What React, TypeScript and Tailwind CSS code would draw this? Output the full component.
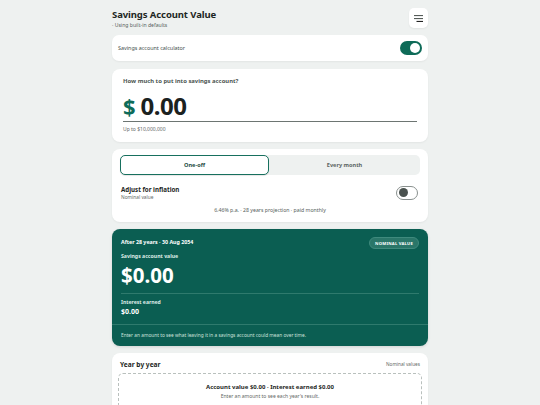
import React from "react";

function Toggle({ on }: { on: boolean }) {
  if (on) {
    return (
      <div className="flex h-[14px] w-[22px] items-center justify-end rounded-full bg-[#0e6b58] px-[2px]">
        <div className="h-[10px] w-[10px] rounded-full bg-white" />
      </div>
    );
  }
  return (
    <div className="flex h-[14px] w-[22px] items-center justify-start rounded-full border border-[#8a918f] bg-white px-[2px]">
      <div className="h-[9px] w-[9px] rounded-full bg-[#4a524f]" />
    </div>
  );
}

export default function App() {
  return (
    <div
      className="min-h-[405px] w-full bg-[#eef1f0] text-[#1d2623]"
      style={{ fontFamily: '"Noto Sans", "Open Sans", sans-serif' }}
    >
      <div className="mx-auto flex w-[316px] flex-col gap-[7px] pt-[8px]">
        {/* header */}
        <div className="flex h-[20px] items-start justify-between">
          <div className="pt-[1px]">
            <h1 className="text-[9.5px] font-bold leading-[12px] tracking-[-0.1px]">Savings Account Value</h1>
            <p className="mt-[1px] text-[5.1px] leading-[6px] text-[#555e5b]">· Using built-in defaults</p>
          </div>
          <button className="flex h-[20px] w-[19px] items-center justify-center rounded-[5px] bg-white shadow-[0_1px_2px_rgba(0,0,0,0.06)]">
            <svg width="9" height="7" viewBox="0 0 9 7">
              <rect x="0" y="0" width="9" height="1.1" fill="#555c59" />
              <rect x="0" y="3" width="9" height="1.1" fill="#555c59" />
              <rect x="2.5" y="5.9" width="6.5" height="1.1" fill="#222" />
            </svg>
          </button>
        </div>

        {/* calculator card */}
        <div className="flex h-[26px] items-center justify-between rounded-[7px] bg-white px-[6px] shadow-[0_1px_2px_rgba(0,0,0,0.05)]">
          <span className="text-[5.4px] text-[#454e4b]">Savings account calculator</span>
          <Toggle on />
        </div>

        {/* amount card */}
        <div className="mt-[1px] rounded-[8px] bg-white px-[11px] pb-[10px] pt-[8px] shadow-[0_1px_2px_rgba(0,0,0,0.05)]">
          <p className="text-[5.9px] font-bold leading-[8px] text-[#4b5451]">How much to put into savings account?</p>
          <div className="mt-[7px] flex items-baseline gap-[5px] border-b border-[#6d7572] pb-[1px]">
            <span className="text-[22px] font-bold leading-[28px] text-[#0e6b58]">$</span>
            <span className="text-[24px] font-bold leading-[28px] tracking-[-0.5px] text-[#1b221f]">0.00</span>
          </div>
          <p className="mt-[4px] text-[5px] leading-[6px] text-[#5f6865]">Up to $10,000,000</p>
        </div>

        {/* frequency card */}
        <div className="rounded-[8px] bg-white px-[8px] pb-[8px] pt-[6px] shadow-[0_1px_2px_rgba(0,0,0,0.05)]">
          <div className="flex h-[20px] rounded-[5px] bg-[#eef1f0]">
            <div className="flex w-[149px] items-center justify-center rounded-[5px] border-[1.5px] border-[#17705e] bg-white text-[5.6px] font-bold text-[#214a40] shadow-[0_1px_1px_rgba(0,0,0,0.1)]">
              One-off
            </div>
            <div className="flex flex-1 items-center justify-center text-[5.6px] font-bold text-[#5d6663]">
              Every month
            </div>
          </div>
          <div className="mt-[10px] flex items-center justify-between pl-[1px] pr-[2px]">
            <div>
              <p className="text-[6.2px] font-bold leading-[9px]">Adjust for inflation</p>
              <p className="text-[4.8px] leading-[6px] text-[#5f6865]">Nominal value</p>
            </div>
            <Toggle on={false} />
          </div>
          <p className="mt-[7px] text-center text-[5.2px] leading-[7px] text-[#555e5b]">
            6.46% p.a. · 28 years projection · paid monthly
          </p>
        </div>

        {/* result card */}
        <div className="rounded-[8px] bg-[#0b5e52] text-white shadow-[0_1px_3px_rgba(0,0,0,0.12)]">
          <div className="px-[9px] pt-[8px]">
            <div className="flex items-center justify-between">
              <span className="text-[5.3px] font-bold">After 28 years · 30 Aug 2054</span>
              <span className="rounded-full border border-[#3f8a7d] bg-[#2a7669] px-[5px] py-[2.5px] text-[4.2px] font-bold leading-[5px] tracking-[0.2px]">
                NOMINAL VALUE
              </span>
            </div>
            <p className="mt-[4px] text-[5.2px] font-bold leading-[7px] text-[#dcebe7]">Savings account value</p>
            <p className="mt-[1px] text-[20.5px] font-bold leading-[28px]">$0.00</p>
            <div className="mt-[4px] border-t border-[#2f7a6d]" />
            <p className="mt-[5px] text-[5.1px] font-bold leading-[7px] text-[#dcebe7]">Interest earned</p>
            <p className="mt-[1px] text-[7px] font-bold leading-[10px]">$0.00</p>
          </div>
          <div className="mt-[7px] border-t border-[#2f7a6d] px-[9px] pb-[7px] pt-[7px]">
            <p className="text-[4.8px] leading-[7px] text-[#cfe2dd]">
              Enter an amount to see what leaving it in a savings account could mean over time.
            </p>
          </div>
        </div>

        {/* year by year */}
        <div className="rounded-[8px] bg-white px-[6px] pb-[10px] pt-[7px] shadow-[0_1px_2px_rgba(0,0,0,0.05)]">
          <div className="flex items-center justify-between px-[2px]">
            <span className="text-[6.6px] font-bold leading-[9px]">Year by year</span>
            <span className="text-[4.7px] text-[#5f6865]">Nominal values</span>
          </div>
          <div className="mt-[4px] rounded-[5px] border border-dashed border-[#b9c0bd] pb-[8px] pt-[9px] text-center">
            <p className="text-[6px] font-bold leading-[8px]">Account value $0.00 · Interest earned $0.00</p>
            <p className="mt-[2px] text-[5px] leading-[7px] text-[#5f6865]">Enter an amount to see each year's result.</p>
          </div>
        </div>
      </div>
    </div>
  );
}
